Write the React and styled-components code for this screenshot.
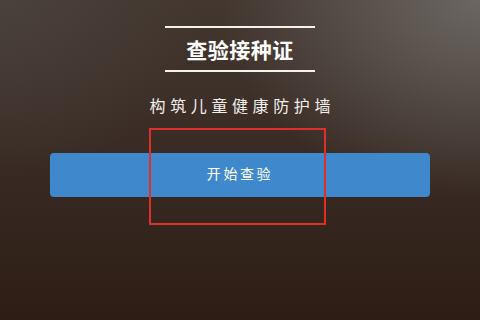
import React from "react";
import styled, { createGlobalStyle } from "styled-components";

const GlobalStyle = createGlobalStyle`
  html, body {
    margin: 0;
    padding: 0;
  }
  body {
    font-family: "Noto Sans CJK SC", "Noto Sans", sans-serif;
  }
`;

export default function App() {
  return (
    <>
      <GlobalStyle />
      <Screen>
        <TitleBlock>
          <Rule />
          <Title>查验接种证</Title>
          <Rule />
        </TitleBlock>
        <Subtitle>构筑儿童健康防护墙</Subtitle>
        <ButtonArea>
          <StartButton>开始查验</StartButton>
          <Highlight />
        </ButtonArea>
      </Screen>
    </>
  );
}

const Screen = styled.div`
  width: 480px;
  height: 320px;
  overflow: hidden;
  display: flex;
  flex-direction: column;
  align-items: center;
  padding-top: 26px;
  box-sizing: border-box;
  background:
    radial-gradient(ellipse 260px 200px at 480px 0px, rgba(120, 118, 116, 0.75), rgba(120, 118, 116, 0) 100%),
    radial-gradient(ellipse 200px 180px at 0px 0px, rgba(80, 72, 68, 0.6), rgba(80, 72, 68, 0) 100%),
    linear-gradient(180deg, #43372f 0%, #3a2c25 45%, #2d1d15 100%);
`;

const TitleBlock = styled.div`
  width: 150px;
  display: flex;
  flex-direction: column;
  align-items: center;
`;

const Rule = styled.div`
  width: 100%;
  height: 2px;
  background: #f4f1ee;
`;

const Title = styled.div`
  color: #ffffff;
  font-size: 21px;
  font-weight: 700;
  line-height: 42px;
  height: 42px;
  letter-spacing: 0.5px;
`;

const Subtitle = styled.div`
  margin-top: 21px;
  height: 24px;
  color: #f2efec;
  font-size: 16px;
  line-height: 24px;
  letter-spacing: 4.6px;
  margin-right: -4.6px;
`;

const ButtonArea = styled.div`
  position: relative;
  width: 380px;
  margin-top: 36px;
`;

const StartButton = styled.div`
  height: 44px;
  box-sizing: border-box;
  padding-bottom: 5px;
  border-radius: 4px;
  background: #3f88cc;
  color: #ffffff;
  display: flex;
  align-items: center;
  justify-content: center;
  font-size: 14px;
  letter-spacing: 2.6px;
`;

const Highlight = styled.div`
  position: absolute;
  left: 99px;
  top: -25px;
  width: 177px;
  height: 97px;
  box-sizing: border-box;
  border: 2px solid #dc3029;
`;
